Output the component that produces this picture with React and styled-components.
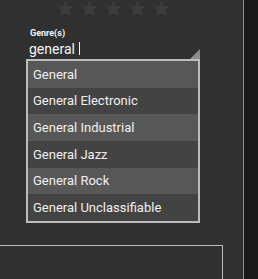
import styled, { createGlobalStyle } from 'styled-components';

const GlobalStyle = createGlobalStyle`
  body {
    margin: 0;
    background: #303030;
    font-family: Roboto, "Liberation Sans", sans-serif;
  }
`;

const genres = [
  'General',
  'General Electronic',
  'General Industrial',
  'General Jazz',
  'General Rock',
  'General Unclassifiable',
];

const Star = () => (
  <svg width="17" height="17" viewBox="0 0 24 24">
    <path
      d="M12 0.5l3.4 7.6 8.2.8-6.2 5.5 1.8 8.1L12 18.3l-7.2 4.2 1.8-8.1L.4 8.9l8.2-.8z"
      fill="#3d3d3d"
    />
  </svg>
);

const App = () => {
  return (
    <Page>
      <GlobalStyle />
      <Main>
        <Stars>
          {[0, 1, 2, 3, 4].map((i) => (
            <Star key={i} />
          ))}
        </Stars>
        <Field>
          <Label>Genre(s)</Label>
          <InputRow>
            <Typed>general</Typed>
            <Caret />
            <Grip />
          </InputRow>
          <List>
            {genres.map((g, i) => (
              <Option key={g} odd={i % 2 === 1}>
                {g}
              </Option>
            ))}
          </List>
        </Field>
        <Panel />
      </Main>
      <Divider />
      <Side />
    </Page>
  );
};

export default App;

const Page = styled.div`
  display: flex;
  height: 279px;
  overflow: hidden;
`;

const Main = styled.div`
  width: 243px;
  display: flex;
  flex-direction: column;
`;

const Divider = styled.div`
  width: 1px;
  background: #d9832b;
`;

const Side = styled.div`
  flex: 1;
  background: #191919;
`;

const Stars = styled.div`
  display: flex;
  gap: 7px;
  padding: 0 0 0 57px;
  height: 18px;
`;

const Field = styled.div`
  margin: 10px 0 0 26px;
  width: 174px;
`;

const Label = styled.div`
  padding-left: 4px;
  font-size: 9px;
  font-weight: 700;
  color: #f2f2f2;
  line-height: 10px;
`;

const InputRow = styled.div`
  position: relative;
  display: flex;
  align-items: center;
  height: 21px;
  padding-left: 3px;
`;

const Typed = styled.span`
  font-size: 14px;
  color: #f4f4f4;
`;

const Caret = styled.span`
  width: 1px;
  height: 13px;
  margin-left: 4px;
  background: #f4f4f4;
`;

const Grip = styled.span`
  position: absolute;
  right: 0;
  bottom: 0;
  width: 0;
  height: 0;
  border-left: 10px solid transparent;
  border-bottom: 10px solid #8c8c8c;
`;

const List = styled.div`
  border: 2px solid #bcbcbc;
  display: flex;
  flex-direction: column;
`;

const Option = styled.div`
  height: 26.67px;
  display: flex;
  align-items: center;
  padding-left: 5px;
  font-size: 13px;
  color: #f0f0f0;
  background: ${(props) => (props.odd ? '#434343' : '#575757')};
`;

const Panel = styled.div`
  margin-top: 22px;
  width: 222px;
  flex: 1;
  border-top: 1px solid #bcbcbc;
  border-right: 1px solid #bcbcbc;
`;
